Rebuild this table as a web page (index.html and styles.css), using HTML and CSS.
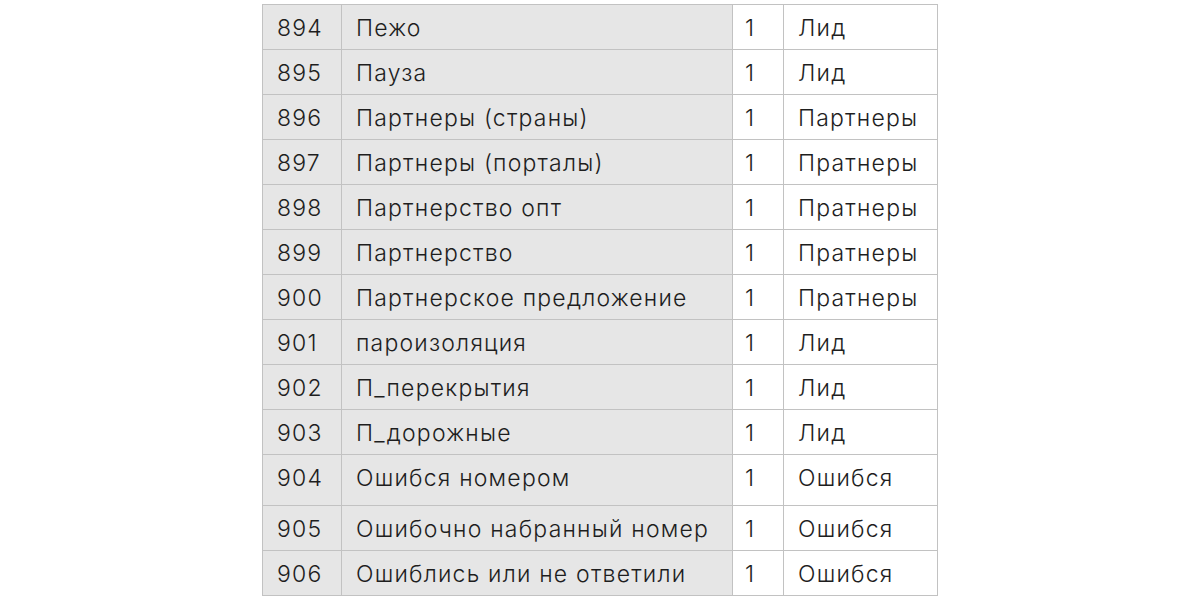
FILE: index.html
```html
<!DOCTYPE html>
<html lang="ru">
<head>
<meta charset="utf-8">
<link rel="stylesheet" href="styles.css">
</head>
<body>
<table class="tbl">
  <colgroup>
    <col class="c-id"><col class="c-name"><col class="c-num"><col class="c-type">
  </colgroup>
  <tbody>
    <tr><td class="g">894</td><td class="g">Пежо</td><td class="n">1</td><td>Лид</td></tr>
    <tr><td class="g">895</td><td class="g">Пауза</td><td class="n">1</td><td>Лид</td></tr>
    <tr><td class="g">896</td><td class="g">Партнеры (страны)</td><td class="n">1</td><td>Партнеры</td></tr>
    <tr><td class="g">897</td><td class="g">Партнеры (порталы)</td><td class="n">1</td><td>Пратнеры</td></tr>
    <tr><td class="g">898</td><td class="g">Партнерство опт</td><td class="n">1</td><td>Пратнеры</td></tr>
    <tr><td class="g">899</td><td class="g">Партнерство</td><td class="n">1</td><td>Пратнеры</td></tr>
    <tr><td class="g">900</td><td class="g">Партнерское предложение</td><td class="n">1</td><td>Пратнеры</td></tr>
    <tr><td class="g">901</td><td class="g">пароизоляция</td><td class="n">1</td><td>Лид</td></tr>
    <tr><td class="g">902</td><td class="g">П_перекрытия</td><td class="n">1</td><td>Лид</td></tr>
    <tr><td class="g">903</td><td class="g">П_дорожные</td><td class="n">1</td><td>Лид</td></tr>
    <tr class="tall"><td class="g">904</td><td class="g">Ошибся номером</td><td class="n">1</td><td>Ошибся</td></tr>
    <tr><td class="g">905</td><td class="g">Ошибочно набранный номер</td><td class="n">1</td><td>Ошибся</td></tr>
    <tr><td class="g">906</td><td class="g">Ошиблись или не ответили</td><td class="n">1</td><td>Ошибся</td></tr>
  </tbody>
</table>
</body>
</html>
```

FILE: styles.css
```css
html, body {
  margin: 0;
  padding: 0;
  background: #ffffff;
}
body {
  padding-top: 4px;
  font-family: Inter, "Noto Sans", sans-serif;
  font-weight: 300;
  color: #1e1e1e;
}
.tbl {
  margin: 0 auto;
  border-collapse: collapse;
  table-layout: fixed;
  width: 675px;
  font-size: 23px;
  letter-spacing: 1.2px;
}
.c-id { width: 79px; }
.c-name { width: 391px; }
.c-num { width: 51px; }
.c-type { width: 154px; }
.tbl td {
  border: 1px solid #c2c2c2;
  height: 44px;
  box-sizing: border-box;
  padding: 10px 0 0 14px;
  vertical-align: top;
  white-space: nowrap;
  line-height: 26px;
}
.tbl td.n { padding-left: 12px; }
.tbl tr { height: 45px; }
.tbl tr.tall { height: 51px; }
.tbl td.g { background: #e6e6e6; }
```
